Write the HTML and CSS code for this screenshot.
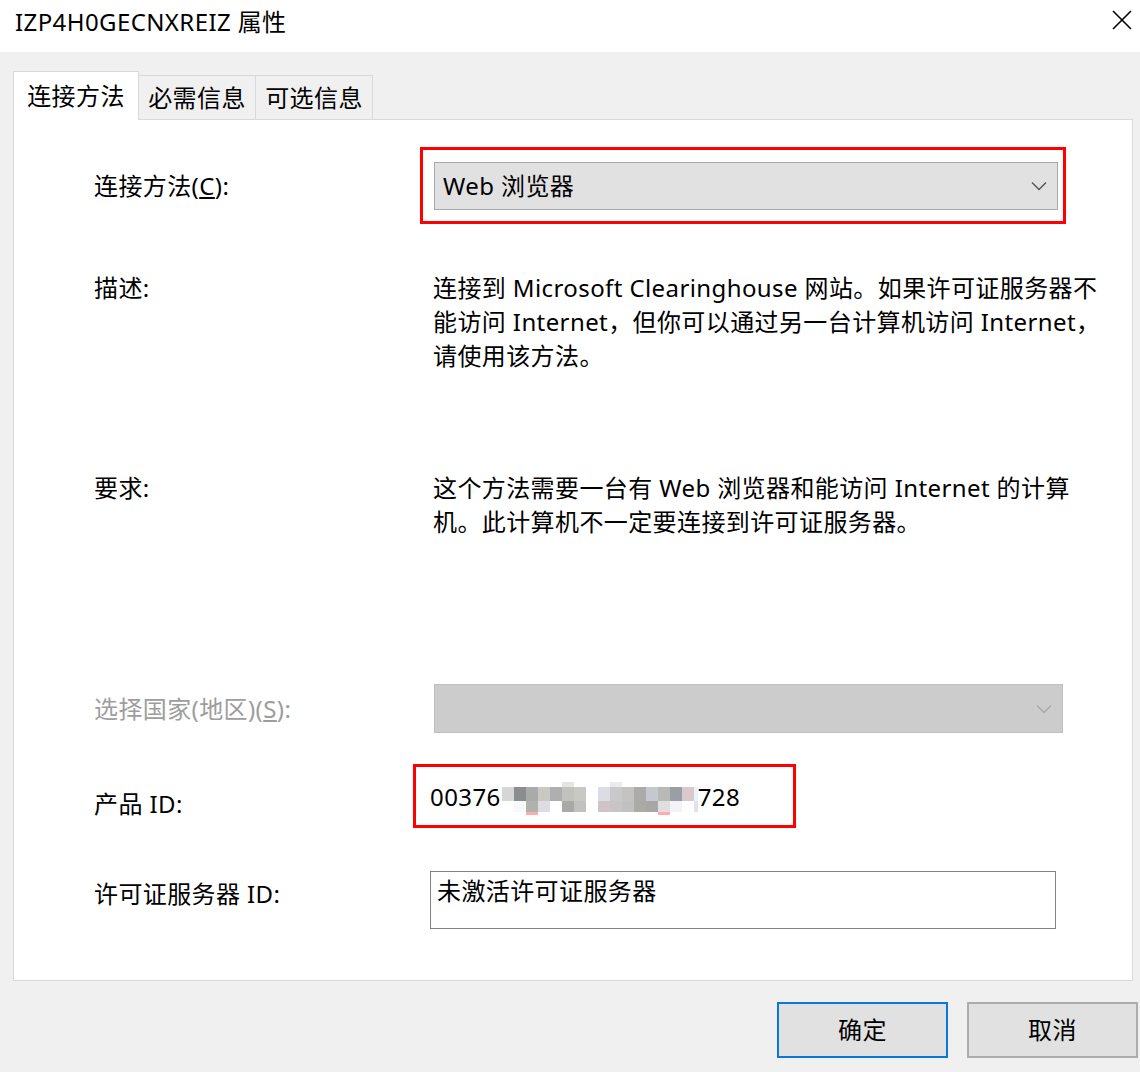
FILE: index.html
```html
<!DOCTYPE html>
<html lang="zh-CN">
<head>
<meta charset="utf-8">
<title>IZP4H0GECNXREIZ 属性</title>
<link rel="stylesheet" href="styles.css">
</head>
<body>
<div class="window">
  <div class="titlebar">
    <span class="title">IZP4H0GECNXREIZ 属性</span>
    <svg class="close" width="20" height="20" viewBox="0 0 20 20"><path d="M1 1 L19 19 M19 1 L1 19" stroke="#000" stroke-width="1.6" fill="none"/></svg>
  </div>
  <div class="body">
    <div class="tabs">
      <div class="tab active">连接方法</div>
      <div class="tab">必需信息</div>
      <div class="tab">可选信息</div>
    </div>
    <div class="panel">
      <div class="row row-conn">
        <div class="label">连接方法(<u>C</u>):</div>
        <div class="highlight hl-combo">
          <div class="combo">
            <span>Web 浏览器</span>
            <svg class="chev" width="16" height="10" viewBox="0 0 16 10"><path d="M1 1.5 L8 8.5 L15 1.5" stroke="#555" stroke-width="1.4" fill="none"/></svg>
          </div>
        </div>
      </div>
      <div class="row row-desc">
        <div class="label">描述:</div>
        <div class="text">连接到 Microsoft Clearinghouse 网站。如果许可证服务器不<br>能访问 Internet，但你可以通过另一台计算机访问 Internet，<br>请使用该方法。</div>
      </div>
      <div class="row row-req">
        <div class="label">要求:</div>
        <div class="text">这个方法需要一台有 Web 浏览器和能访问 Internet 的计算<br>机。此计算机不一定要连接到许可证服务器。</div>
      </div>
      <div class="row row-country">
        <div class="label disabled">选择国家(地区)(<u>S</u>):</div>
        <div class="combo combo-disabled">
          <span></span>
          <svg class="chev" width="16" height="10" viewBox="0 0 16 10"><path d="M1 1.5 L8 8.5 L15 1.5" stroke="#a9a9a9" stroke-width="1.4" fill="none"/></svg>
        </div>
      </div>
      <div class="row row-pid">
        <div class="label label-pid">产品 ID:</div>
        <div class="highlight hl-pid">
          <span>00376</span>
          <svg class="mosaic" width="196" height="33" viewBox="0 0 196 33">
            <rect x="60" y="0" width="12" height="5" fill="#e6e4e1"/>
            <rect x="108" y="0" width="12" height="5" fill="#e9ebee"/>
            <rect x="0" y="5" width="12" height="14" fill="#d6d6d6"/>
            <rect x="12" y="5" width="12" height="14" fill="#8b8e8e"/>
            <rect x="24" y="5" width="12" height="14" fill="#a9aaaa"/>
            <rect x="36" y="5" width="12" height="14" fill="#c9c8c1"/>
            <rect x="48" y="5" width="12" height="14" fill="#afafaf"/>
            <rect x="60" y="5" width="12" height="14" fill="#c1c1bd"/>
            <rect x="72" y="5" width="12" height="14" fill="#c9c9c3"/>
            <rect x="96" y="5" width="12" height="14" fill="#dcdde4"/>
            <rect x="108" y="5" width="12" height="14" fill="#c9c9c9"/>
            <rect x="120" y="5" width="12" height="14" fill="#c4c3c1"/>
            <rect x="132" y="5" width="12" height="14" fill="#ababaa"/>
            <rect x="144" y="5" width="12" height="14" fill="#c5c8cf"/>
            <rect x="156" y="5" width="12" height="14" fill="#b9b9b7"/>
            <rect x="168" y="5" width="12" height="14" fill="#9a9fa5"/>
            <rect x="180" y="5" width="12" height="14" fill="#d9c9cd"/>
            <rect x="192" y="5" width="4" height="14" fill="#e8f4f8"/>
            <rect x="12" y="19" width="12" height="11" fill="#f8f8f8"/>
            <rect x="24" y="19" width="12" height="11" fill="#b1b1ad"/>
            <rect x="36" y="19" width="12" height="11" fill="#dcdce1"/>
            <rect x="60" y="19" width="12" height="11" fill="#a9a9a5"/>
            <rect x="72" y="19" width="12" height="11" fill="#c1c1bf"/>
            <rect x="96" y="19" width="12" height="11" fill="#cdc5c7"/>
            <rect x="108" y="19" width="12" height="11" fill="#c9c5c7"/>
            <rect x="120" y="19" width="12" height="11" fill="#c1c1c1"/>
            <rect x="132" y="19" width="12" height="11" fill="#abaaa7"/>
            <rect x="144" y="19" width="12" height="11" fill="#a9a6a6"/>
            <rect x="156" y="19" width="12" height="11" fill="#e1dee1"/>
            <rect x="168" y="19" width="12" height="11" fill="#f4f4f8"/>
            <rect x="192" y="19" width="4" height="11" fill="#e1e1e9"/>
            <rect x="24" y="30" width="12" height="3" fill="#ffabb1"/>
            <rect x="156" y="30" width="12" height="3" fill="#ffabb1"/>
          </svg>
          <span>728</span>
        </div>
      </div>
      <div class="row row-lic">
        <div class="label label-lic">许可证服务器 ID:</div>
        <div class="textbox">未激活许可证服务器</div>
      </div>
    </div>
    <div class="buttons">
      <button class="btn btn-default">确定</button>
      <button class="btn">取消</button>
    </div>
  </div>
</div>
</body>
</html>
```

FILE: styles.css
```css
* {
  box-sizing: border-box;
}

html, body {
  margin: 0;
  padding: 0;
}

body {
  width: 1140px;
  height: 1072px;
  overflow: hidden;
  background: #f0f0f0;
  font-family: "Noto Sans", "Noto Sans CJK SC", sans-serif;
  font-size: 24px;
  letter-spacing: 0.4px;
  color: #000;
}

.titlebar {
  height: 52px;
  background: #fff;
  display: flex;
  justify-content: space-between;
  align-items: flex-start;
  padding: 5px 8px 0 15px;
}

.title {
  line-height: 34px;
}

.close {
  margin-top: 5px;
}

.body {
  padding: 19px 2px 0 13px;
}

.tabs {
  display: flex;
  align-items: flex-end;
  height: 48px;
}

.tab {
  width: 118px;
  height: 44px;
  margin-left: -1px;
  border: 1px solid #d9d9d9;
  border-bottom: none;
  background: #f0f0f0;
  display: flex;
  align-items: center;
  justify-content: center;
  line-height: 1;
}

.tab.active {
  width: 126px;
  height: 49px;
  margin-left: 0;
  margin-bottom: -1px;
  background: #fff;
  position: relative;
  z-index: 1;
}

.panel {
  width: 1120px;
  height: 862px;
  border: 1px solid #d9d9d9;
  background: #fff;
  padding-left: 80px;
}

.row {
  display: grid;
  grid-template-columns: 319px 1fr;
  align-items: start;
}

.label {
  line-height: 34px;
  white-space: nowrap;
}

.label.disabled {
  color: #9d9d9d;
}

.row-conn {
  margin-top: 27px;
  align-items: center;
}

.row-desc {
  margin-top: 47px;
}

.row-req {
  margin-top: 98px;
}

.row-country {
  margin-top: 145px;
  align-items: center;
}

.row-pid {
  margin-top: 31px;
}

.row-lic {
  margin-top: 43px;
}

.label-pid {
  margin-top: 23px;
}

.label-lic {
  margin-top: 6px;
}

.text {
  margin-left: 20px;
  line-height: 34px;
  white-space: nowrap;
}

.highlight {
  border: 3px solid #ff0000;
}

.hl-combo {
  margin-left: 7px;
  width: 646px;
  height: 77px;
  padding: 12px 5px 11px 11px;
}

.combo {
  width: 624px;
  height: 48px;
  border: 1px solid #a9a9a9;
  background: #e1e1e1;
  display: flex;
  align-items: center;
  justify-content: space-between;
  padding: 0 10px 0 8px;
  line-height: 34px;
}

.combo-disabled {
  margin-left: 21px;
  width: 629px;
  height: 49px;
  background: #cccccc;
  border-color: #bfbfbf;
}

.hl-pid {
  width: 383px;
  height: 64px;
  padding: 13px 0 0 14px;
  display: flex;
  align-items: flex-start;
}

.hl-pid span {
  line-height: 34px;
}

.mosaic {
  margin-top: 2px;
  margin-left: 1px;
  flex: none;
}

.textbox {
  margin-left: 17px;
  width: 626px;
  height: 58px;
  border: 1px solid #828282;
  background: #fff;
  padding: 2px 6px;
  line-height: 34px;
}

.buttons {
  display: flex;
  justify-content: flex-end;
  gap: 19px;
  margin-top: 21px;
}

.btn {
  width: 171px;
  height: 56px;
  background: #e1e1e1;
  border: 2px solid #adadad;
  font-family: inherit;
  font-size: 24px;
  letter-spacing: 0.4px;
  color: #000;
  padding: 0;
  line-height: 1;
}

.btn-default {
  border-color: #0a78d7;
}
```
